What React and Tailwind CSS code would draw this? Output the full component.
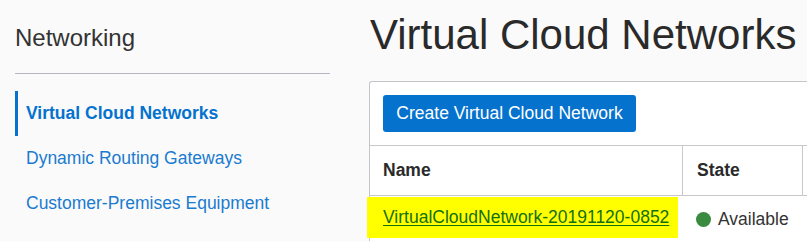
export default function App() {
  const font = { fontFamily: '"Liberation Sans", Arial, sans-serif' };
  return (
    <div
      className="w-[807px] h-[241px] bg-[#fafafa] flex overflow-hidden text-[#333]"
      style={font}
    >
      <aside className="w-[369px] shrink-0 pl-[15px]">
        <div className="pt-[26px] text-[24px] leading-[24px] text-[#333]">Networking</div>
        <div className="mt-[23px] h-px w-[315px] bg-[#b4b7bd]" />
        <nav className="mt-[17px] flex flex-col text-[17.5px]">
          <a className="h-[45px] flex items-center border-l-[3px] border-[#0572ce] pl-[8px] font-bold text-[#0572ce]">
            Virtual Cloud Networks
          </a>
          <a className="h-[45px] flex items-center border-l-[3px] border-transparent pl-[8px] text-[#1a7bd0]">
            Dynamic Routing Gateways
          </a>
          <a className="h-[45px] flex items-center border-l-[3px] border-transparent pl-[8px] text-[#1a7bd0]">
            Customer-Premises Equipment
          </a>
        </nav>
      </aside>
      <main className="flex-1 min-w-0">
        <h1 className="pt-[14px] pl-[1px] text-[42px] leading-[42px] text-[#2a2a2a] whitespace-nowrap">
          Virtual Cloud Networks
        </h1>
        <div className="mt-[25px] w-[470px] bg-white border-l border-t border-[#c4c5c8] rounded-tl-[3px]">
          <div className="pt-[13px] pb-[13px] pl-[13px]">
            <button className="h-[37px] w-[253px] rounded-[3px] bg-[#0572ce] text-white text-[17.5px] flex items-center justify-center">
              Create Virtual Cloud Network
            </button>
          </div>
          <div className="flex h-[51px] border-y border-[#c8c8c8] font-bold text-[17.5px] text-[#2a2a2a]">
            <div className="w-[313px] border-r border-[#c8c8c8] flex items-center pl-[13px]">Name</div>
            <div className="w-[120px] border-r border-[#c8c8c8] flex items-center pl-[14px]">State</div>
            <div className="flex-1" />
          </div>
          <div className="flex h-[46px] text-[17.5px]">
            <div className="w-[313px] flex items-start">
              <div className="-ml-[3px] mt-[1px] h-[41px] w-[311px] bg-[#ffff00] flex items-center pl-[16px]">
                <a className="text-[#137010] underline decoration-1 underline-offset-[2px]">
                  VirtualCloudNetwork-20191120-0852
                </a>
              </div>
            </div>
            <div className="w-[120px] flex items-center pl-[13px] gap-[7px] text-[#333]">
              <span className="w-[15px] h-[15px] rounded-full bg-[#3a8a3f] shrink-0" />
              <span>Available</span>
            </div>
          </div>
        </div>
      </main>
    </div>
  );
}
